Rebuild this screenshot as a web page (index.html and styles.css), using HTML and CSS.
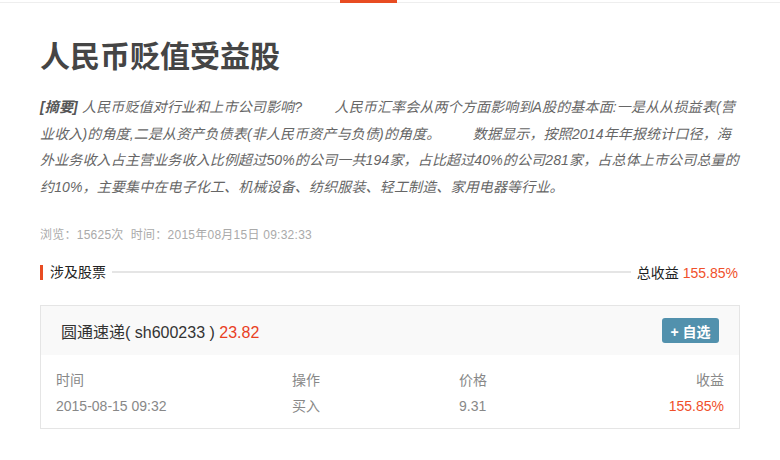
FILE: index.html
```html
<!DOCTYPE html>
<html lang="zh-CN">
<head>
    <meta charset="UTF-8">
    <title>人民币贬值受益股</title>
    <link rel="stylesheet" href="styles.css">
</head>
<body>
    <div class="nav">
        <span class="nav-active"></span>
    </div>

    <div class="container">
        <h1 class="title">人民币贬值受益股</h1>

        <p class="summary"><b>[摘要]</b> 人民币贬值对行业和上市公司影响?&nbsp;&nbsp;&nbsp;&nbsp;&nbsp;&nbsp;&nbsp;&nbsp;人民币汇率会从两个方面影响到A股的基本面:一是从从损益表(营业收入)的角度,二是从资产负债表(非人民币资产与负债)的角度。&nbsp;&nbsp;&nbsp;&nbsp;&nbsp;&nbsp;&nbsp;&nbsp;数据显示，按照2014年年报统计口径，海外业务收入占主营业务收入比例超过50%的公司一共194家，占比超过40%的公司281家，占总体上市公司总量的约10%，主要集中在电子化工、机械设备、纺织服装、轻工制造、家用电器等行业。</p>

        <div class="meta">浏览：15625次&nbsp;&nbsp;时间：2015年08月15日 09:32:33</div>

        <div class="section-head">
            <span class="section-name">涉及股票</span>
            <span class="section-line"></span>
            <span class="section-total">总收益 <em class="up">155.85%</em></span>
        </div>

        <div class="stock-card">
            <div class="stock-head">
                <span class="stock-name">圆通速递( sh600233 ) <em class="up">23.82</em></span>
                <button class="btn-fav">+ 自选</button>
            </div>
            <div class="stock-table">
                <div class="cell">时间</div>
                <div class="cell">操作</div>
                <div class="cell">价格</div>
                <div class="cell right">收益</div>
                <div class="cell">2015-08-15 09:32</div>
                <div class="cell">买入</div>
                <div class="cell">9.31</div>
                <div class="cell right up">155.85%</div>
            </div>
        </div>
    </div>
</body>
</html>
```

FILE: styles.css
```css
body {
    margin: 0;
    padding: 0;
    background-color: #fff;
    font-family: "Liberation Sans", "Noto Sans CJK SC", sans-serif;
    color: #333;
}

.nav {
    display: flex;
    height: 3px;
    padding-left: 340px;
    box-shadow: inset 0 -1px 0 #eee;
}

.nav-active {
    width: 57px;
    height: 3px;
    background-color: #e84c22;
}

.container {
    width: 700px;
    margin: 0 40px;
}

.title {
    margin: 34px 0 0;
    font-size: 30px;
    line-height: 40px;
    font-weight: bold;
    color: #454545;
}

.summary {
    margin: 17px 0 0;
    font-size: 14px;
    line-height: 26.5px;
    font-style: italic;
    letter-spacing: 0.15px;
    color: #666;
}

.summary b {
    color: #555;
}

.meta {
    margin-top: 25px;
    font-size: 12px;
    line-height: 20px;
    letter-spacing: 0.25px;
    color: #aaa;
}

.section-head {
    display: flex;
    align-items: center;
    margin-top: 17px;
    height: 20px;
    padding-right: 2px;
    font-size: 14px;
}

.section-name {
    border-left: 3px solid #e84c22;
    padding-left: 7px;
    line-height: 15px;
    color: #222;
}

.section-line {
    flex: 1;
    height: 2px;
    margin: 0 6px;
    background-color: #e5e5e5;
}

.section-total {
    color: #222;
}

em {
    font-style: normal;
}

.up {
    color: #f0502a;
}

.stock-card {
    margin-top: 23px;
    border: 1px solid #e5e5e5;
}

.stock-head {
    display: flex;
    justify-content: space-between;
    align-items: center;
    height: 49px;
    padding: 0 20px 0 20px;
    background-color: #f9f9f9;
}

.stock-name {
    font-size: 16px;
    color: #333;
}

.stock-name .up {
    color: #e9401f;
}

.btn-fav {
    width: 57px;
    height: 25px;
    padding: 0;
    border: none;
    border-radius: 3px;
    background-color: #5291ad;
    color: #fff;
    font-family: inherit;
    font-size: 14px;
    font-weight: bold;
    cursor: pointer;
}

.stock-table {
    display: grid;
    grid-template-columns: 236px 167px 1fr auto;
    padding: 12px 15px 9px;
    font-size: 14px;
    line-height: 26px;
    color: #888;
}

.right {
    text-align: right;
}
```
